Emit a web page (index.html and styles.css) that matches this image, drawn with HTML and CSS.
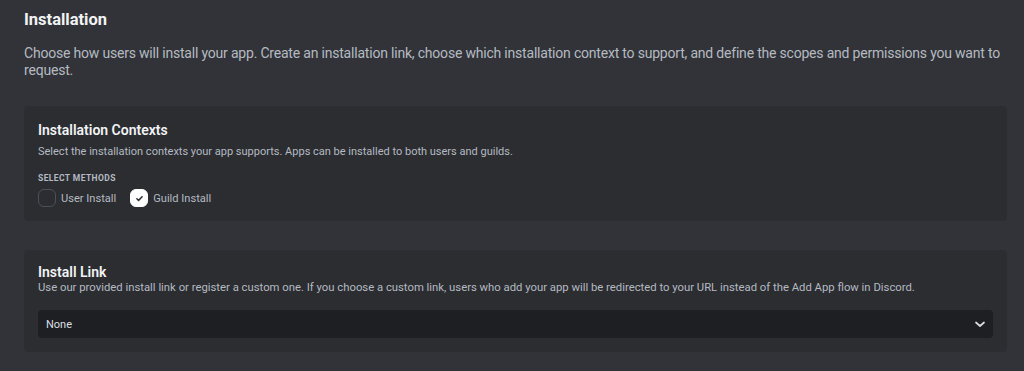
FILE: index.html
```html
<html>

<head>
    <title>Installation</title>
    <link rel="stylesheet" href="styles.css">
</head>

<body>
    <div class="page">
        <h2 class="page-title">Installation</h2>
        <p class="page-desc">Choose how users will install your app. Create an installation link, choose which installation context to support, and define the scopes and permissions you want to request.</p>

        <section class="card">
            <h3 class="card-title">Installation Contexts</h3>
            <p class="card-desc contexts-desc">Select the installation contexts your app supports. Apps can be installed to both users and guilds.</p>
            <div class="field-label">Select Methods</div>
            <div class="methods">
                <label class="check">
                    <span class="box"></span>
                    <span>User Install</span>
                </label>
                <label class="check">
                    <span class="box checked">
                        <svg width="9" height="9" viewBox="0 0 24 24">
                            <path d="M5 12.5l4.5 4.5L19 7.5" fill="none" stroke="#2b2d31" stroke-width="4" stroke-linecap="round" stroke-linejoin="round"/>
                        </svg>
                    </span>
                    <span>Guild Install</span>
                </label>
            </div>
        </section>

        <section class="card link-card">
            <h3 class="card-title">Install Link</h3>
            <p class="card-desc">Use our provided install link or register a custom one. If you choose a custom link, users who add your app will be redirected to your URL instead of the Add App flow in Discord.</p>
            <div class="select">
                <span>None</span>
                <svg width="12" height="12" viewBox="0 0 24 24">
                    <path d="M4 9l8 7 8-7" fill="none" stroke="#dbdee1" stroke-width="3.4" stroke-linecap="round" stroke-linejoin="round"/>
                </svg>
            </div>
        </section>
    </div>
</body>

</html>
```

FILE: styles.css
```css
html {
    background: #313338;
}

body {
    margin: 0;
    font-family: Roboto, 'Noto Sans', sans-serif;
    color: #b5bac1;
}

.page {
    width: 1007px;
    padding: 9px 0 0 24px;
    box-sizing: border-box;
}

.page-title {
    margin: 0;
    font-size: 16.5px;
    line-height: 22px;
    font-weight: 700;
    color: #f2f3f5;
}

.page-desc {
    margin: 14px 0 0 0;
    font-size: 14px;
    line-height: 17px;
    letter-spacing: -0.2px;
    color: #b5bac1;
}

.card {
    background-color: #2b2d31;
    border-radius: 4px;
    padding: 14px;
    margin-top: 27px;
}

.link-card {
    margin-top: 29px;
}

.card-title {
    margin: 0;
    font-size: 14px;
    line-height: 20px;
    font-weight: 600;
    color: #f2f3f5;
}

.link-card .card-title {
    line-height: 17px;
}

.card-desc {
    margin: 0;
    font-size: 11.3px;
    line-height: 14px;
    color: #b5bac1;
}

.contexts-desc {
    margin-top: 5px;
    font-size: 11px;
}

.field-label {
    margin-top: 14px;
    font-size: 8.5px;
    line-height: 10px;
    font-weight: 700;
    text-transform: uppercase;
    letter-spacing: 0.4px;
    color: #b5bac1;
}

.methods {
    display: flex;
    gap: 14px;
    margin-top: 6px;
}

.check {
    display: flex;
    align-items: center;
    gap: 5px;
    font-size: 11.1px;
    color: #b5bac1;
}

.box {
    width: 16px;
    height: 16px;
    border: 1px solid #4e5058;
    border-radius: 6px;
    display: flex;
    align-items: center;
    justify-content: center;
}

.box.checked {
    background-color: #ffffff;
    border-color: #ffffff;
}

.select {
    margin-top: 15px;
    height: 28px;
    background-color: #1e1f22;
    border-radius: 4px;
    padding: 0 7px 0 8px;
    display: flex;
    align-items: center;
    justify-content: space-between;
    font-size: 11px;
    color: #dbdee1;
}
```
